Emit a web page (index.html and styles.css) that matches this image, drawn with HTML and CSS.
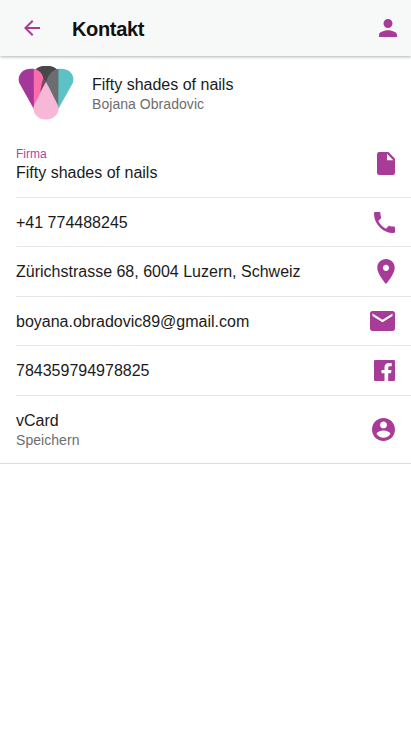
FILE: index.html
```html
<!DOCTYPE html>
<html lang="de">
<head>
    <meta charset="UTF-8">
    <meta name="viewport" content="width=device-width, initial-scale=1.0">
    <title>Kontakt</title>
    <link rel="stylesheet" href="styles.css">
</head>
<body>
    <header class="toolbar">
        <svg class="back" viewBox="4 4 16 16"><path d="M20 11H7.83l5.59-5.59L12 4l-8 8 8 8 1.41-1.41L7.83 13H20v-2z"/></svg>
        <h1>Kontakt</h1>
        <svg class="user" viewBox="4 4 16 16"><path d="M12 12c2.21 0 4-1.79 4-4s-1.79-4-4-4-4 1.79-4 4 1.79 4 4 4zm0 2c-2.67 0-8 1.34-8 4v2h16v-2c0-2.66-5.33-4-8-4z"/></svg>
    </header>

    <div class="profile">
        <svg class="logo" viewBox="0 0 56 54">
            <path fill="#a43797" d="M16 3C5 1.500 -1.500 9 1.300 17L15.800 43L20 35V4z"/>
            <path fill="#5dc2c5" d="M40 3C51 1.500 57.500 9 54.800 17L40.300 43L36 35V4z"/>
            <path fill="#484848" d="M17.500 3.500C22 -1.600 34.500 -1.600 39 3.500L36 15L28 22L20 15z"/>
            <path fill="#fc6eab" d="M15.800 3C21 3.500 24.500 7.500 25.500 13L26.500 18.500L15.800 42z"/>
            <path fill="#7d4b65" d="M25.300 11.500L28 15.700L22.500 26.500C22.500 21 24 16 25.300 11.500z"/>
            <path fill="#6c6d70" d="M40.500 3C35 3.500 30.500 8 28.500 15L28 16L40.300 42z"/>
            <path fill="#f7b7d7" d="M28 15.700L40 39.500C42.500 47 36 53.600 28 53.600S13.500 47 16 39.500z"/>
        </svg>
        <div>
            <h2>Fifty shades of nails</h2>
            <p class="note">Bojana Obradovic</p>
        </div>
    </div>

    <main class="list">
        <div class="item company">
            <div class="text">
                <p class="label">Firma</p>
                <h2>Fifty shades of nails</h2>
            </div>
            <svg class="document" viewBox="0 0 18 23"><path fill-rule="evenodd" d="M2.300 0H11.500L18 6.700V20.700Q18 23 15.700 23H2.300Q0 23 0 20.700V2.300Q0 0 2.300 0zM10 1.800V8.300H16.300z"/></svg>
        </div>
        <div class="item">
            <h2 class="text">+41 774488245</h2>
            <svg class="phone" viewBox="3 3 18 18"><path d="M6.620 10.790c1.440 2.830 3.760 5.140 6.590 6.590l2.200-2.200c.27-.27.67-.36 1.020-.24 1.120.37 2.330.57 3.570.57.55 0 1 .45 1 1V20c0 .55-.45 1-1 1-9.390 0-17-7.610-17-17 0-.55.45-1 1-1h3.500c.55 0 1 .45 1 1 0 1.250.2 2.450.57 3.570.11.35.03.74-.25 1.020l-2.200 2.200z"/></svg>
        </div>
        <div class="item">
            <h2 class="text">Zürichstrasse 68, 6004 Luzern, Schweiz</h2>
            <svg class="pin" viewBox="5 2 14 20"><path d="M12 2C8.130 2 5 5.130 5 9c0 5.250 7 13 7 13s7-7.750 7-13c0-3.870-3.130-7-7-7zm0 9.500c-1.380 0-2.500-1.120-2.500-2.500s1.120-2.500 2.500-2.500 2.500 1.120 2.500 2.500-1.120 2.500-2.500 2.500z"/></svg>
        </div>
        <div class="item">
            <h2 class="text">boyana.obradovic89@gmail.com</h2>
            <svg class="mail" viewBox="2 4 20 16"><path d="M20 4H4c-1.100 0-1.990.9-1.990 2L2 18c0 1.100.9 2 2 2h16c1.100 0 2-.9 2-2V6c0-1.100-.9-2-2-2zm0 4l-8 5-8-5V6l8 5 8-5v2z"/></svg>
        </div>
        <div class="item">
            <h2 class="text">784359794978825</h2>
            <svg class="facebook" viewBox="0 0 21 21"><path d="M1.200 0H19.800Q21 0 21 1.200V19.800Q21 21 19.800 21H14.200V13.200H17L17.500 10H14.200V8C14.200 6.800 14.700 6.200 15.900 6.200H17.700V3H14.800C12 3 10.500 4.800 10.500 7.400V10H7.500V13.200H10.500V21H1.200Q0 21 0 19.800V1.200Q0 0 1.200 0z"/></svg>
        </div>
        <div class="item vcard">
            <div class="text">
                <h2>vCard</h2>
                <p class="note">Speichern</p>
            </div>
            <svg class="contact" viewBox="2 2 20 20"><path d="M12 2C6.480 2 2 6.480 2 12s4.480 10 10 10 10-4.480 10-10S17.520 2 12 2zm0 3c1.660 0 3 1.340 3 3s-1.340 3-3 3-3-1.340-3-3 1.340-3 3-3zm0 14.200c-2.500 0-4.710-1.280-6-3.220.03-1.990 4-3.080 6-3.080 1.990 0 5.970 1.090 6 3.080-1.290 1.940-3.500 3.220-6 3.220z"/></svg>
        </div>
    </main>
</body>
</html>
```
FILE: styles.css
```css
* {
    box-sizing: border-box;
}
body {
    margin: 0;
    background: #fff;
    color: #1b1b1b;
    font-family: "Liberation Sans", Arial, sans-serif;
}
h1, h2, p {
    margin: 0;
}
svg {
    display: block;
    flex: none;
    fill: #a83b98;
}
.toolbar {
    display: flex;
    align-items: center;
    height: 56px;
    padding: 0 14px 0 24px;
    background: #f7f9f9;
    box-shadow: 0 1px 3px rgba(0, 0, 0, 0.3);
}
.toolbar h1 {
    flex: 1;
    margin: 2px 0 0 32px;
    color: #111;
    font-size: 20px;
    font-weight: bold;
    line-height: 24px;
    letter-spacing: -0.35px;
}
.back {
    width: 16px;
    height: 16px;
}
.user {
    width: 18px;
    height: 18px;
}
.profile {
    display: flex;
    padding: 10px 18px 0;
    height: 75px;
}
.profile h2 {
    margin-top: 9px;
}
.logo {
    width: 56px;
    height: 54px;
    margin-right: 18px;
}
h2 {
    font-size: 16px;
    font-weight: normal;
    line-height: 20px;
}
.note {
    color: #6d6d6d;
    font-size: 14px;
    line-height: 18px;
    letter-spacing: 0.05px;
}
.label {
    color: #b046a3;
    font-size: 12px;
    line-height: 16px;
}
.list {
    padding-left: 16px;
    border-bottom: 1px solid #dedede;
}
.item {
    display: flex;
    align-items: center;
    justify-content: space-between;
    height: 49.5px;
    padding-right: 16px;
    border-bottom: 1px solid #e6e6e6;
}
.text {
    padding-top: 2px;
}
.company {
    height: 66.5px;
}
.company h2 {
    margin-top: 1px;
}
.vcard {
    height: 67px;
    border-bottom: 0;
}
.document {
    width: 18px;
    height: 23px;
}
.phone, .facebook {
    width: 21px;
    height: 21px;
}
.phone {
    margin-top: 1px;
}
.pin {
    width: 18px;
    height: 25px;
}
.mail {
    width: 25px;
    height: 20px;
    margin-top: 1px;
}
.contact {
    width: 23px;
    height: 23px;
}
```
